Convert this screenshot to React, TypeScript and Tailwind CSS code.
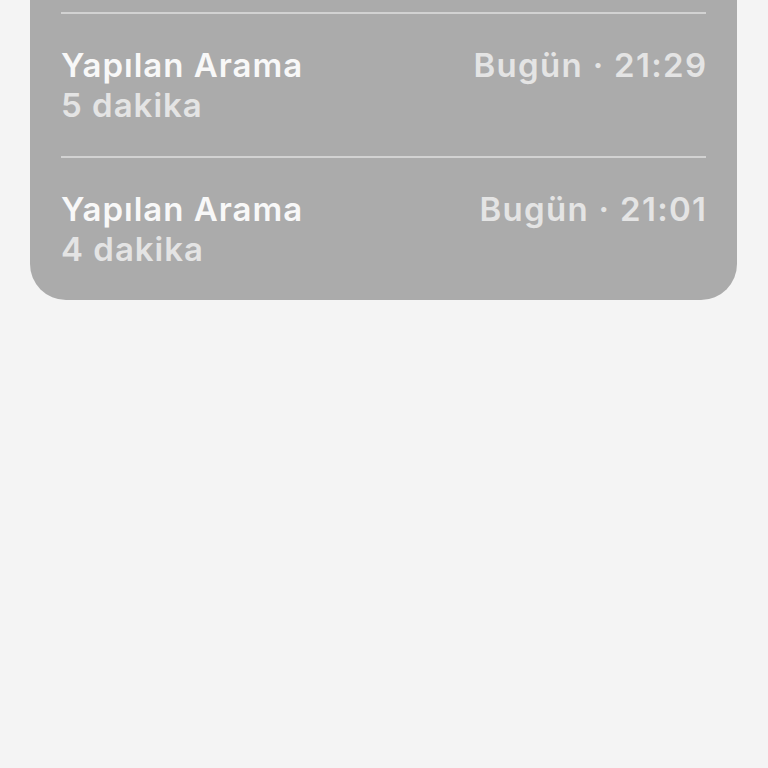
const calls = [
  { title: 'Yapılan Arama', duration: '5 dakika', time: 'Bugün · 21:29' },
  { title: 'Yapılan Arama', duration: '4 dakika', time: 'Bugün · 21:01' },
];

export default function App() {
  return (
    <div
      className="min-h-[768px] bg-[#f4f4f4]"
      style={{ fontFamily: 'Inter, "Noto Sans", sans-serif' }}
    >
      <div className="ml-[30px] mr-[31px] bg-[#ababab] rounded-b-[36px] pt-[12px] px-[31px]">
        {calls.map((c, i) => (
          <div key={i}>
            <div className="h-[2px] bg-[#d2d2d2]" />
            <div className="h-[142px] flex items-start justify-between pt-[31px]">
              <div className="flex flex-col">
                <span className="text-[33px] leading-[40px] font-semibold text-[#f8f8f8] tracking-[1px]">
                  {c.title}
                </span>
                <span className="text-[33px] leading-[40px] font-semibold text-[#e4e4e4] tracking-[1px]">
                  {c.duration}
                </span>
              </div>
              <span className="text-[33px] leading-[40px] font-semibold text-[#e4e4e4] tracking-[1.3px] -mr-[1.3px]">
                {c.time}
              </span>
            </div>
          </div>
        ))}
      </div>
    </div>
  );
}
